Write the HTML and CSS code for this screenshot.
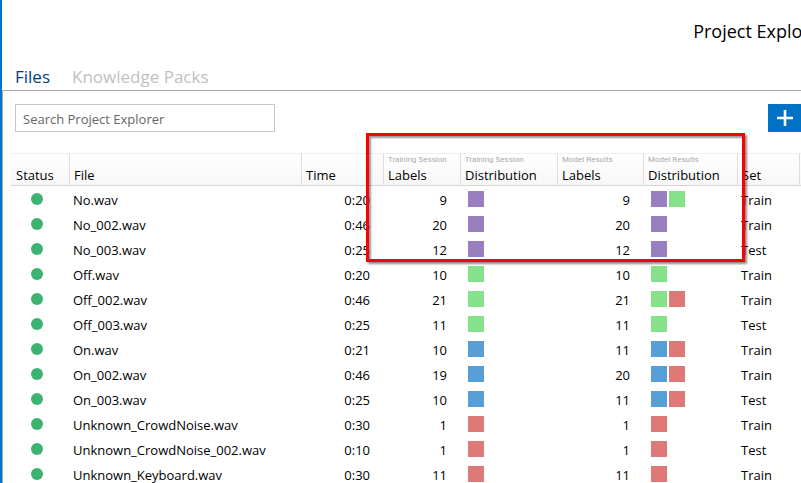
FILE: index.html
```html
<!DOCTYPE html>
<html lang="en">
<head>
<meta charset="utf-8">
<title>Project Explorer</title>
<link rel="stylesheet" href="styles.css">
</head>
<body>
<div class="window">
  <header class="titlebar"><h1 class="title">Project Explorer</h1></header>
  <nav class="tabs">
    <button class="tab tab-active" type="button">Files</button>
    <button class="tab" type="button">Knowledge Packs</button>
  </nav>
  <main class="panel">
    <div class="toolbar">
      <input class="search" type="text" aria-label="Search Project Explorer" placeholder="Search Project Explorer">
      <button class="add" type="button" aria-label="Add file">
        <svg width="16" height="16" viewBox="0 0 16 16" aria-hidden="true"><path d="M8 0V16M0 8H16" stroke="#fff" stroke-width="2.6"/></svg>
      </button>
    </div>
    <div class="grid">
      <table class="files">
        <colgroup>
          <col class="c-status"><col class="c-file"><col class="c-time"><col class="c-tlabels"><col class="c-tdist"><col class="c-mlabels"><col class="c-mdist"><col class="c-set"><col>
        </colgroup>
        <thead>
          <tr>
            <th>Status</th><th>File</th><th>Time</th>
            <th><small>Training Session</small>Labels</th>
            <th><small>Training Session</small>Distribution</th>
            <th><small>Model Results</small>Labels</th>
            <th><small>Model Results</small>Distribution</th>
            <th>Set</th><th></th>
          </tr>
        </thead>
        <tbody id="rows"></tbody>
      </table>
      <div class="highlight"></div>
    </div>
  </main>
</div>
<script src="app.js"></script>
</body>
</html>
```
FILE: styles.css
```css
* { box-sizing: border-box; }

body {
  margin: 0;
  overflow: hidden;
  background: #fff;
  color: #000;
  font: 13px/24px "Open Sans", "Noto Sans", sans-serif;
}

button, input { font: inherit; }

.window {
  height: 100vh;
  display: flex;
  flex-direction: column;
  overflow: hidden;
  border-left: 2px solid #0072c9;
}

.titlebar { height: 62px; padding-top: 19px; overflow: hidden; }

.title {
  margin: 0 0 0 86.5%;
  font-size: 18px;
  font-weight: 400;
  line-height: 24px;
  white-space: nowrap;
}

.tabs {
  height: 28px;
  display: flex;
  gap: 22px;
  padding-left: 13px;
}

.tab {
  padding: 0;
  border: 0;
  background: none;
  color: #bfbfbf;
  font-size: 17px;
  line-height: 30px;
}

.tab-active { color: #003e7e; }

.panel {
  flex: 1;
  min-height: 0;
  overflow: hidden;
  border-top: 1px solid #a9a9a9;
  border-left: 1px solid #a9a9a9;
}

.toolbar {
  display: flex;
  justify-content: space-between;
  padding: 13px 0 21px 12px;
}

.search {
  width: 260px;
  height: 28px;
  padding: 2px 7px 0;
  border: 1px solid #c6c6c6;
  background: #fff;
  color: #000;
}

.search::placeholder { color: #666; opacity: 1; }

.add {
  width: 33px;
  height: 28px;
  padding: 0;
  border: 0;
  background: #0072c6;
  display: grid;
  place-items: center;
}

.grid { position: relative; padding-left: 8px; }

.files {
  width: 100%;
  table-layout: fixed;
  border-collapse: separate;
  border-spacing: 0;
}

.c-status { width: 59px; }
.c-file { width: 232px; }
.c-time { width: 82px; }
.c-tlabels { width: 77px; }
.c-tdist { width: 97px; }
.c-mlabels { width: 86px; }
.c-mdist { width: 94px; }
.c-set { width: 62px; }

th {
  height: 33px;
  padding: 0 4px 1px;
  border: solid #d5d5d5;
  border-width: 1px 1px 1px 0;
  border-top-color: #f0f0f0;
  border-right-color: #dedede;
  background: linear-gradient(#fff, #f7f7f8);
  font-weight: 400;
  line-height: 18px;
  text-align: left;
  vertical-align: bottom;
  white-space: nowrap;
}

th:first-child { padding-left: 5px; }
th:last-child { border-right: 0; }

th small {
  display: block;
  color: #aaa;
  font-family: Roboto, sans-serif;
  font-size: 8px;
  line-height: 12px;
}

td {
  height: 25px;
  padding: 3px 4px 0 3px;
  line-height: 22px;
  white-space: nowrap;
}

td.num { padding-right: 14px; text-align: right; }

.dot {
  display: block;
  width: 12px;
  height: 12px;
  margin: 0 auto 2px 17px;
  border-radius: 50%;
  background: #3cb371;
}

.swatches { display: flex; gap: 2px; padding: 0 0 3px 4px; }
.swatch { width: 16px; height: 16px; }
.purple { background: #997fbf; }
.green { background: #85e28a; }
.blue { background: #579dd6; }
.red { background: #de7977; }

.highlight {
  position: absolute;
  top: -20px;
  left: 363px;
  width: 379px;
  height: 129px;
  border: 3px solid #f00;
  box-shadow: 2px 2px 2px rgba(0, 0, 0, .45), inset 2px 2px 2px rgba(0, 0, 0, .4);
  pointer-events: none;
}
```
FILE: app.js
```js
const files = [
  ["No.wav", "0:20", 9, ["purple"], 9, ["purple", "green"], "Train"],
  ["No_002.wav", "0:46", 20, ["purple"], 20, ["purple"], "Train"],
  ["No_003.wav", "0:25", 12, ["purple"], 12, ["purple"], "Test"],
  ["Off.wav", "0:20", 10, ["green"], 10, ["green"], "Train"],
  ["Off_002.wav", "0:46", 21, ["green"], 21, ["green", "red"], "Train"],
  ["Off_003.wav", "0:25", 11, ["green"], 11, ["green"], "Test"],
  ["On.wav", "0:21", 10, ["blue"], 11, ["blue", "red"], "Train"],
  ["On_002.wav", "0:46", 19, ["blue"], 20, ["blue", "red"], "Train"],
  ["On_003.wav", "0:25", 10, ["blue"], 11, ["blue", "red"], "Test"],
  ["Unknown_CrowdNoise.wav", "0:30", 1, ["red"], 1, ["red"], "Train"],
  ["Unknown_CrowdNoise_002.wav", "0:10", 1, ["red"], 1, ["red"], "Test"],
  ["Unknown_Keyboard.wav", "0:30", 11, ["red"], 11, ["red"], "Train"]
];

const swatches = colors =>
  `<div class="swatches">${colors.map(c => `<span class="swatch ${c}"></span>`).join("")}</div>`;

document.getElementById("rows").innerHTML = files.map(([name, time, tl, td, ml, md, set]) => `
  <tr>
    <td><span class="dot"></span></td>
    <td>${name}</td>
    <td class="num">${time}</td>
    <td class="num">${tl}</td>
    <td>${swatches(td)}</td>
    <td class="num">${ml}</td>
    <td>${swatches(md)}</td>
    <td>${set}</td>
    <td></td>
  </tr>`).join("");
```
